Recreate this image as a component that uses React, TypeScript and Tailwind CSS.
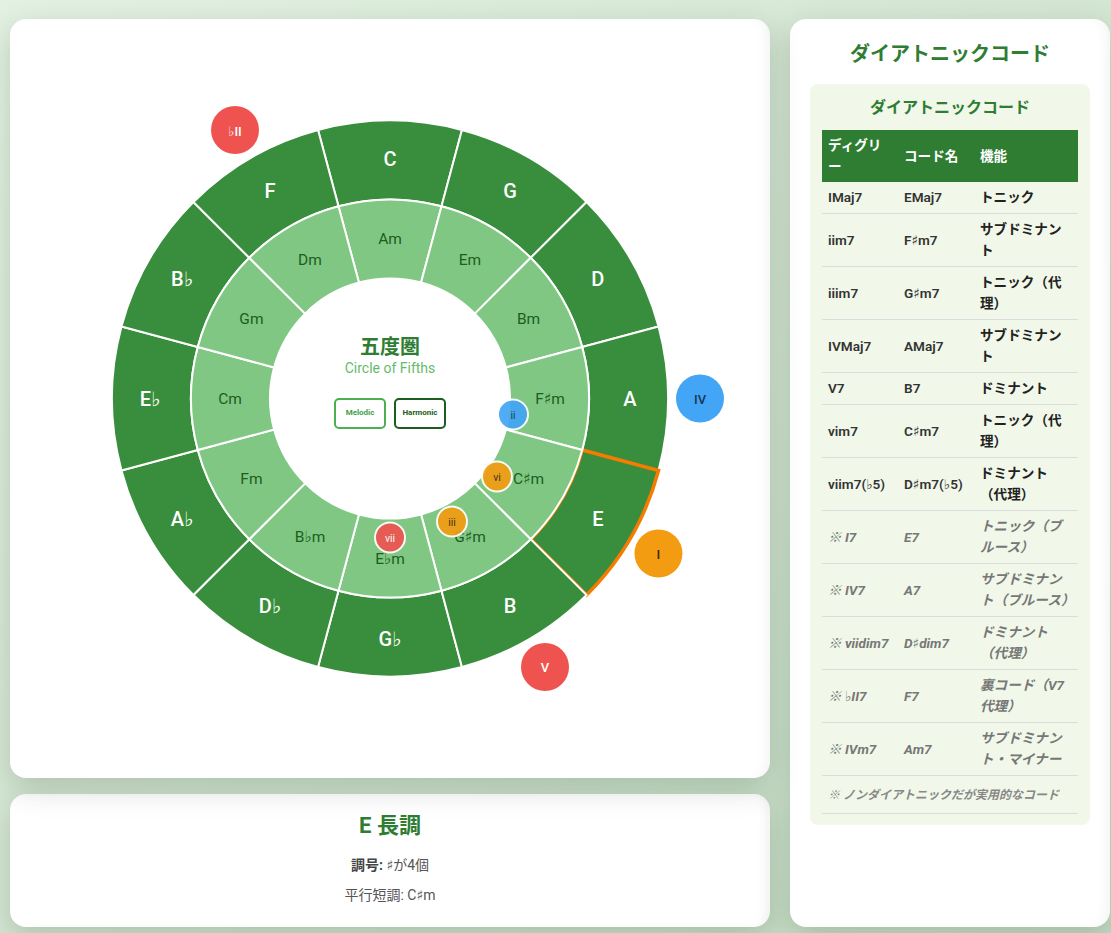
import React from 'react'

const MAJORS = ['C', 'G', 'D', 'A', 'E', 'B', 'G♭', 'D♭', 'A♭', 'E♭', 'B♭', 'F']
const MINORS = ['Am', 'Em', 'Bm', 'F♯m', 'C♯m', 'G♯m', 'E♭m', 'B♭m', 'Fm', 'Cm', 'Gm', 'Dm']

const CX = 380
const CY = 379.5
const R_OUT = 278
const R_MID = 199
const R_IN = 120
const KEY = 4 // E

function pt(r: number, deg: number): [number, number] {
  const a = (deg * Math.PI) / 180
  return [CX + r * Math.sin(a), CY - r * Math.cos(a)]
}

function ringPath(r1: number, r2: number, i: number) {
  const [ax, ay] = pt(r2, i * 30 - 15)
  const [bx, by] = pt(r2, i * 30 + 15)
  const [cx, cy] = pt(r1, i * 30 + 15)
  const [dx, dy] = pt(r1, i * 30 - 15)
  return `M${ax} ${ay} A${r2} ${r2} 0 0 1 ${bx} ${by} L${cx} ${cy} A${r1} ${r1} 0 0 0 ${dx} ${dy} Z`
}

const OUTER_BADGES = [
  { label: '♭II', idx: 11, fill: '#ef5350', text: '#ffffff' },
  { label: 'IV', idx: 3, fill: '#42a5f5', text: '#1c3550' },
  { label: 'I', idx: 4, fill: '#f39c12', text: '#3b2a12' },
  { label: 'V', idx: 5, fill: '#ef5350', text: '#ffffff' },
]

const INNER_BADGES = [
  { label: 'ii', dx: 123, dy: 16, fill: '#42a5f5', text: '#1c3550' },
  { label: 'vi', dx: 107, dy: 78, fill: '#f39c12', text: '#3b2a12' },
  { label: 'iii', dx: 62, dy: 123, fill: '#f39c12', text: '#3b2a12' },
  { label: 'vii', dx: 0, dy: 139, fill: '#ef5350', text: '#ffffff' },
]

const ROWS = [
  { deg: 'IMaj7', chord: 'EMaj7', fn: 'トニック' },
  { deg: 'iim7', chord: 'F♯m7', fn: 'サブドミナン\nト' },
  { deg: 'iiim7', chord: 'G♯m7', fn: 'トニック（代\n理）' },
  { deg: 'IVMaj7', chord: 'AMaj7', fn: 'サブドミナン\nト' },
  { deg: 'V7', chord: 'B7', fn: 'ドミナント' },
  { deg: 'vim7', chord: 'C♯m7', fn: 'トニック（代\n理）' },
  { deg: 'viim7(♭5)', chord: 'D♯m7(♭5)', fn: 'ドミナント\n（代理）' },
]

const EXTRA_ROWS = [
  { deg: 'I7', chord: 'E7', fn: 'トニック（ブ\nルース）' },
  { deg: 'IV7', chord: 'A7', fn: 'サブドミナン\nト（ブルース）' },
  { deg: 'viidim7', chord: 'D♯dim7', fn: 'ドミナント\n（代理）' },
  { deg: '♭II7', chord: 'F7', fn: '裏コード（V7\n代理）' },
  { deg: 'IVm7', chord: 'Am7', fn: 'サブドミナン\nト・マイナー' },
]

function CircleOfFifths() {
  return (
    <svg width={760} height={759} className="block">
      {MAJORS.map((name, i) =>
        i === KEY ? null : (
          <path key={name} d={ringPath(R_MID, R_OUT, i)} fill="#388e3c" stroke="#ffffff" strokeWidth={2} />
        ),
      )}
      <path d={ringPath(R_MID, R_OUT, KEY)} fill="#388e3c" stroke="#f57c00" strokeWidth={3.5} />
      <path d={ringPath(R_MID, R_OUT, KEY + 1)} fill="#388e3c" stroke="#ffffff" strokeWidth={2} />
      {MINORS.map((name, i) => (
        <path key={name} d={ringPath(R_IN, R_MID, i)} fill="#81c784" stroke="#ffffff" strokeWidth={2} />
      ))}
      {MAJORS.map((name, i) => {
        const [x, y] = pt(240, i * 30)
        return (
          <text key={name} x={x} y={y} textAnchor="middle" dominantBaseline="central" fill="#ffffff" fontSize={20} fontWeight={500}>
            {name}
          </text>
        )
      })}
      {MINORS.map((name, i) => {
        const [x, y] = pt(160, i * 30)
        return (
          <text key={name} x={x} y={y} textAnchor="middle" dominantBaseline="central" fill="#1b5e20" fontSize={15.5}>
            {name}
          </text>
        )
      })}
      {OUTER_BADGES.map((b) => {
        const [x, y] = pt(310, b.idx * 30)
        return (
          <g key={b.label}>
            <circle cx={x} cy={y} r={24} fill={b.fill} />
            <text x={x} y={y + 1} textAnchor="middle" dominantBaseline="central" fill={b.text} fontSize={13} fontWeight={500}>
              {b.label}
            </text>
          </g>
        )
      })}
      {INNER_BADGES.map((b) => (
        <g key={b.label} opacity={0.92}>
          <circle cx={CX + b.dx} cy={CY + b.dy} r={15} fill={b.fill} stroke="#ffffff" strokeWidth={2} />
          <text x={CX + b.dx} y={CY + b.dy + 1} textAnchor="middle" dominantBaseline="central" fill={b.text} fontSize={10.5}>
            {b.label}
          </text>
        </g>
      ))}
    </svg>
  )
}

export default function App() {
  return (
    <div className="min-h-screen w-full bg-linear-to-br from-[#e3f1e2] to-[#c5dcc4] pl-[10px] pt-[19px] pb-4 font-['Roboto','DejaVu_Sans','Noto_Sans_CJK_JP',sans-serif]">
      <div className="flex gap-5">
        <div className="flex w-[760px] flex-col gap-4">
          <div className="relative h-[759px] overflow-hidden rounded-2xl bg-white shadow-[0_10px_30px_rgba(40,70,40,0.22),inset_-10px_0_14px_-8px_rgba(0,0,0,0.06)]">
            <CircleOfFifths />
            <div className="absolute left-[260px] top-[259.5px] flex h-[240px] w-[240px] flex-col items-center justify-center pb-[34px]">
              <div className="text-xl leading-6 font-bold text-[#2e7d32]">五度圏</div>
              <div className="text-sm leading-[18px] text-[#66bb6a]">Circle of Fifths</div>
              <div className="mt-[21px] flex gap-2">
                <button className="h-[31px] w-[52px] rounded-[5px] border-2 border-[#4caf50] bg-white text-[8px] font-bold text-[#43a047]">
                  Melodic
                </button>
                <button className="h-[31px] w-[52px] rounded-[5px] border-2 border-[#1b5e20] bg-white text-[8px] font-bold text-[#1b5e20]">
                  Harmonic
                </button>
              </div>
            </div>
          </div>
          <div className="h-[133px] rounded-2xl bg-white pt-[17px] text-center shadow-[0_10px_30px_rgba(40,70,40,0.22),inset_-10px_0_14px_-8px_rgba(0,0,0,0.06)]">
            <h2 className="text-[22px] leading-[30px] font-bold text-[#2e7d32]">E 長調</h2>
            <p className="mt-[14px] text-sm leading-5 text-[#555]">
              <span className="font-bold text-[#444]">調号:</span> ♯が4個
            </p>
            <p className="mt-[10px] text-sm leading-5 text-[#555]">平行短調: C♯m</p>
          </div>
        </div>
        <div className="w-[320px] rounded-2xl bg-white px-5 pt-[21px] shadow-[0_10px_30px_rgba(40,70,40,0.22),inset_-10px_0_14px_-8px_rgba(0,0,0,0.06)]">
          <h2 className="text-center text-xl leading-7 font-bold text-[#2e7d32]">ダイアトニックコード</h2>
          <div className="mt-4 rounded-lg bg-[#f1f8e9] px-3 pt-3 pb-[11px]">
            <h3 className="text-center text-base leading-6 font-bold text-[#2e7d32]">ダイアトニックコード</h3>
            <table className="mt-[10px] w-full table-fixed border-collapse text-[13.6px] leading-[21px]">
              <colgroup>
                <col className="w-[76px]" />
                <col className="w-[76px]" />
                <col className="w-[104px]" />
              </colgroup>
              <thead>
                <tr className="bg-[#2e7d32] text-white">
                  <th className="px-1.5 py-[5px] text-left font-bold whitespace-pre">{'ディグリ\nー'}</th>
                  <th className="px-1.5 py-[5px] text-left font-bold">コード名</th>
                  <th className="px-1.5 py-[5px] text-left font-bold">機能</th>
                </tr>
              </thead>
              <tbody>
                {ROWS.map((r) => (
                  <tr key={r.deg} className="border-b border-[#dcdcdc]">
                    <td className="px-1.5 py-[5px] font-semibold whitespace-nowrap text-[#333]">{r.deg}</td>
                    <td className="px-1.5 py-[5px] font-semibold whitespace-nowrap text-[#333]">{r.chord}</td>
                    <td className="px-1.5 py-[5px] font-bold whitespace-pre text-[#222]">{r.fn}</td>
                  </tr>
                ))}
                {EXTRA_ROWS.map((r) => (
                  <tr key={r.deg} className="border-b border-[#dcdcdc] italic">
                    <td className="px-1.5 py-[5px] font-bold whitespace-nowrap text-[#777]">
                      <span className="font-['Noto_Sans_CJK_JP',sans-serif]">※</span> {r.deg}
                    </td>
                    <td className="px-1.5 py-[5px] font-bold whitespace-nowrap text-[#777]">{r.chord}</td>
                    <td className="px-1.5 py-[5px] font-bold whitespace-pre text-[#777]">{r.fn}</td>
                  </tr>
                ))}
                <tr className="border-b border-[#dcdcdc]">
                  <td colSpan={3} className="px-1.5 py-[9px] text-xs leading-[17px] font-bold italic text-[#888]">
                    <span className="font-['Noto_Sans_CJK_JP',sans-serif]">※</span> ノンダイアトニックだが実用的なコード
                  </td>
                </tr>
              </tbody>
            </table>
          </div>
        </div>
      </div>
    </div>
  )
}
